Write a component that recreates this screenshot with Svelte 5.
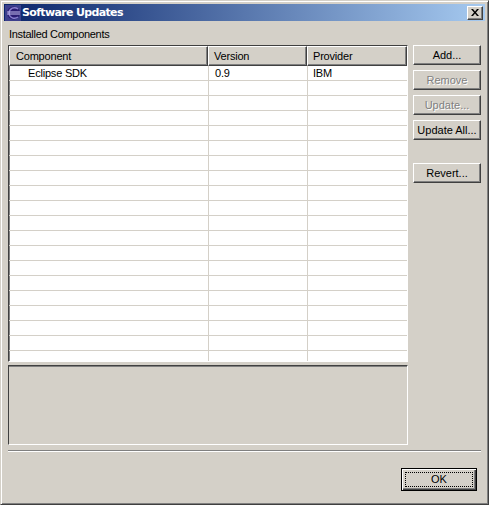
<script>
  const columns = ["Component", "Version", "Provider"];
  const rows = Array.from({ length: 20 }, (_, i) =>
    i == 0 ? ["Eclipse SDK", "0.9", "IBM"] : ["", "", ""]
  );
</script>

<div class="window">
  <div class="titlebar">
    <svg class="appicon" width="16" height="16" viewBox="0 0 16 16">
      <rect width="16" height="16" fill="#3c3f8c" />
      <circle cx="8.5" cy="8" r="6.5" fill="#2a1c72" />
      <path d="M4 8a5.5 5.5 0 0 1 9-4" fill="none" stroke="#8a80d0" stroke-width="1.4" />
      <path d="M4 8a5.5 5.5 0 0 0 9 4" fill="none" stroke="#8a80d0" stroke-width="1.4" />
      <path d="M2 7h13M2 9h13" stroke="#c4bfee" stroke-width="1" />
    </svg>
    <span class="title">Software Updates</span>
    <span class="close">
      <svg width="8" height="7" viewBox="0 0 8 7">
        <path d="M0 0h2l2 2.5L6 0h2L5 3.5 8 7H6L4 4.5 2 7H0l3-3.5z" fill="#000" />
      </svg>
    </span>
  </div>

  <div class="label">Installed Components</div>

  <div class="main">
    <div class="left">
      <div class="table">
        <div class="row head">
          {#each columns as c}
            <div class="th">{c}</div>
          {/each}
        </div>
        <div class="body">
          {#each rows as r, i}
            <div class="row line">
              {#each r as v, j}
                <div class="td" class:first={j == 0 && i == 0}>{v}</div>
              {/each}
            </div>
          {/each}
        </div>
      </div>
      <div class="details"></div>
    </div>
    <div class="buttons">
      <button>Add...</button>
      <button disabled>Remove</button>
      <button disabled>Update...</button>
      <button>Update All...</button>
      <button class="revert">Revert...</button>
    </div>
  </div>

  <div class="sep"></div>

  <div class="footer">
    <button class="ok"><span>OK</span></button>
  </div>
</div>

<style>
  :global(body) {
    margin: 0;
    background: #d4d0c8;
  }
  .window {
    box-sizing: border-box;
    width: 489px;
    height: 505px;
    background: #d4d0c8;
    border: 1px solid;
    border-color: #d4d0c8 #404040 #404040 #d4d0c8;
    box-shadow:
      inset 1px 1px 0 #fff,
      inset -1px -1px 0 #808080;
    padding: 3px 3px 0 3px;
    font-family: "Liberation Sans", Arial, sans-serif;
    font-size: 11px;
    letter-spacing: -0.2px;
    color: #000;
    display: flex;
    flex-direction: column;
  }
  .titlebar {
    height: 17px;
    flex: none;
    display: flex;
    align-items: center;
    background: linear-gradient(to right, #0a246a, #a6caf0);
    padding: 0 2px 0 1px;
    color: #fff;
    font-weight: bold;
  }
  .appicon {
    flex: none;
  }
  .title {
    margin-left: 1px;
    font-family: "DejaVu Sans", sans-serif;
    font-size: 11px;
    letter-spacing: -0.65px;
  }
  .close {
    margin-left: auto;
    width: 16px;
    height: 14px;
    box-sizing: border-box;
    background: #d4d0c8;
    border: 1px solid;
    border-color: #fff #404040 #404040 #fff;
    box-shadow: inset -1px -1px 0 #808080;
    display: flex;
    align-items: center;
    justify-content: center;
  }
  .label {
    margin: 6px 0 0 5px;
    height: 18px;
    line-height: 14px;
    letter-spacing: -0.3px;
    flex: none;
  }
  .main {
    display: flex;
    gap: 5px;
    margin-left: 4px;
    flex: none;
  }
  .left {
    width: 400px;
  }
  .table {
    box-sizing: border-box;
    height: 317px;
    width: 400px;
    border: 1px solid;
    border-color: #404040 #fff #fff #404040;
    box-shadow: inset 1px 1px 0 #808080;
    background: #fff;
    overflow: hidden;
  }
  .row {
    display: grid;
    grid-template-columns: 200px 99px 1fr;
  }
  .head {
    height: 19px;
    background: #d4d0c8;
    grid-template-columns: 199px 99px 1fr;
  }
  .th {
    box-sizing: border-box;
    padding-left: 5px;
    line-height: 18px;
    border: 1px solid;
    border-color: #fff #404040 #404040 #fff;
    box-shadow: inset -1px -1px 0 #808080;
  }
  .th:first-child {
    padding-left: 6px;
  }
  .body {
    padding-top: 1px;
  }
  .line {
    height: 15px;
    box-sizing: border-box;
    border-bottom: 1px solid #d4d0c8;
  }
  .td {
    box-sizing: border-box;
    border-right: 1px solid #d4d0c8;
    padding-left: 6px;
    line-height: 14px;
  }
  .td:last-child {
    border-right: 0;
    padding-left: 5px;
  }
  .td.first {
    padding-left: 19px;
  }
  .details {
    box-sizing: border-box;
    height: 80px;
    margin-top: 3px;
    border: 1px solid;
    border-color: #404040 #fff #fff #404040;
    box-shadow: inset 0 1px 0 #808080;
  }
  .buttons {
    display: flex;
    flex-direction: column;
    gap: 5px;
    width: 68px;
  }
  button {
    box-sizing: border-box;
    height: 20px;
    padding: 0;
    font: inherit;
    letter-spacing: 0;
    color: #000;
    background: #d4d0c8;
    border: 1px solid;
    border-color: #fff #404040 #404040 #fff;
    box-shadow: inset -1px -1px 0 #808080;
  }
  button:disabled {
    color: #808080;
    text-shadow: 1px 1px 0 #fff;
  }
  .revert {
    margin-top: 18px;
  }
  .sep {
    flex: none;
    width: 473px;
    margin: 5px 0 0 4px;
    height: 2px;
    box-sizing: border-box;
    border-top: 1px solid #808080;
    border-bottom: 1px solid #fff;
  }
  .footer {
    flex: none;
    display: flex;
    justify-content: flex-end;
    padding: 16px 8px 0 0;
  }
  .ok {
    width: 76px;
    height: 23px;
    border: 1px solid #000;
    outline: none;
    box-shadow:
      inset 1px 1px 0 #fff,
      inset -1px -1px 0 #404040,
      inset -2px -2px 0 #808080;
    padding: 3px;
  }
  .ok span {
    display: block;
    height: 100%;
    line-height: 13px;
    border: 1px dotted #000;
    box-sizing: border-box;
  }
</style>
